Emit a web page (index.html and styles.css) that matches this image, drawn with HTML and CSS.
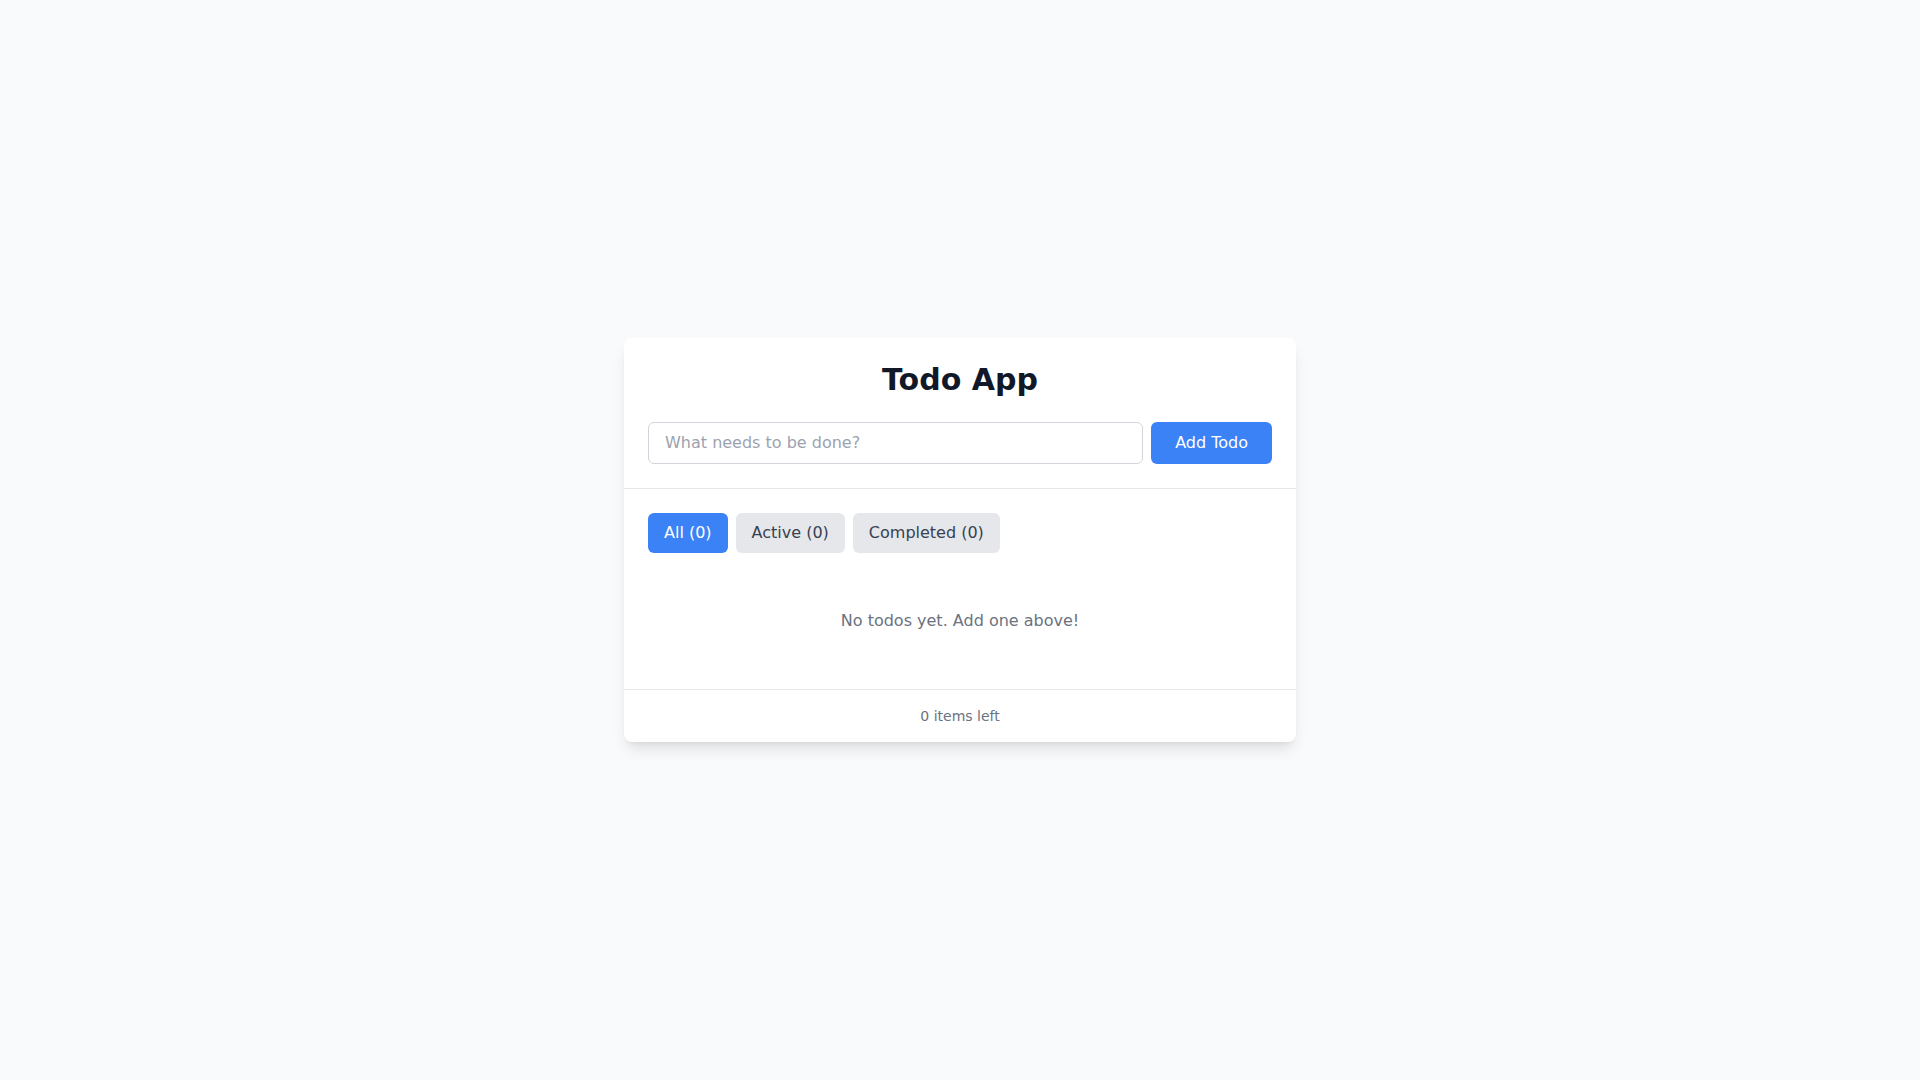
FILE: index.html
```html
<!DOCTYPE html>
<html lang="en">
<head>
<meta charset="utf-8">
<title>Todo App</title>
<link rel="stylesheet" href="styles.css">
</head>
<body>
<main class="page">
  <div class="card">
    <div class="header">
      <h1 class="title">Todo App</h1>
      <form class="add-form" onsubmit="return false">
        <input class="add-input" type="text" placeholder="What needs to be done?">
        <button class="add-btn" type="submit">Add Todo</button>
      </form>
    </div>
    <div class="body">
      <div class="filters">
        <button class="filter active">All (0)</button>
        <button class="filter">Active (0)</button>
        <button class="filter">Completed (0)</button>
      </div>
      <p class="empty">No todos yet. Add one above!</p>
    </div>
    <div class="footer">0 items left</div>
  </div>
</main>
</body>
</html>
```

FILE: styles.css
```css
* { box-sizing: border-box; }
html, body { margin: 0; padding: 0; }
body {
  background: #f9fafb;
  font-family: "DejaVu Sans", sans-serif;
  color: #111827;
  min-height: 100vh;
}
.page {
  min-height: 100vh;
  display: flex;
  align-items: center;
  justify-content: center;
}
.card {
  width: 672px;
  background: #ffffff;
  border-radius: 8px;
  box-shadow: 0 10px 15px -3px rgba(0,0,0,0.1), 0 4px 6px -4px rgba(0,0,0,0.1);
  overflow: hidden;
}
.header {
  padding: 24px;
  border-bottom: 1px solid #e5e7eb;
}
.title {
  margin: 0 0 24px;
  font-size: 30px;
  line-height: 36px;
  font-weight: 700;
  text-align: center;
  color: #111827;
}
.add-form {
  display: flex;
  gap: 8px;
}
.add-input {
  flex: 1;
  font-family: inherit;
  font-size: 16px;
  line-height: 24px;
  padding: 8px 16px;
  border: 1px solid #d1d5db;
  border-radius: 6px;
  color: #111827;
  outline: none;
}
.add-input::placeholder { color: #9ca3af; }
.add-btn {
  font-family: inherit;
  font-size: 16px;
  line-height: 24px;
  padding: 8px 24px;
  background: #3b82f6;
  color: #ffffff;
  border: none;
  border-radius: 6px;
  cursor: pointer;
}
.body {
  padding: 24px;
}
.filters {
  display: flex;
  gap: 8px;
  margin-bottom: 24px;
}
.filter {
  font-family: inherit;
  font-size: 16px;
  line-height: 24px;
  padding: 8px 16px;
  background: #e5e7eb;
  color: #374151;
  border: none;
  border-radius: 6px;
  cursor: pointer;
}
.filter.active {
  background: #3b82f6;
  color: #ffffff;
}
.empty {
  margin: 0;
  padding: 32px 0;
  text-align: center;
  font-size: 16px;
  line-height: 24px;
  color: #6b7280;
}
.footer {
  border-top: 1px solid #e5e7eb;
  padding: 16px 24px;
  text-align: center;
  font-size: 14px;
  line-height: 20px;
  color: #6b7280;
}
```
